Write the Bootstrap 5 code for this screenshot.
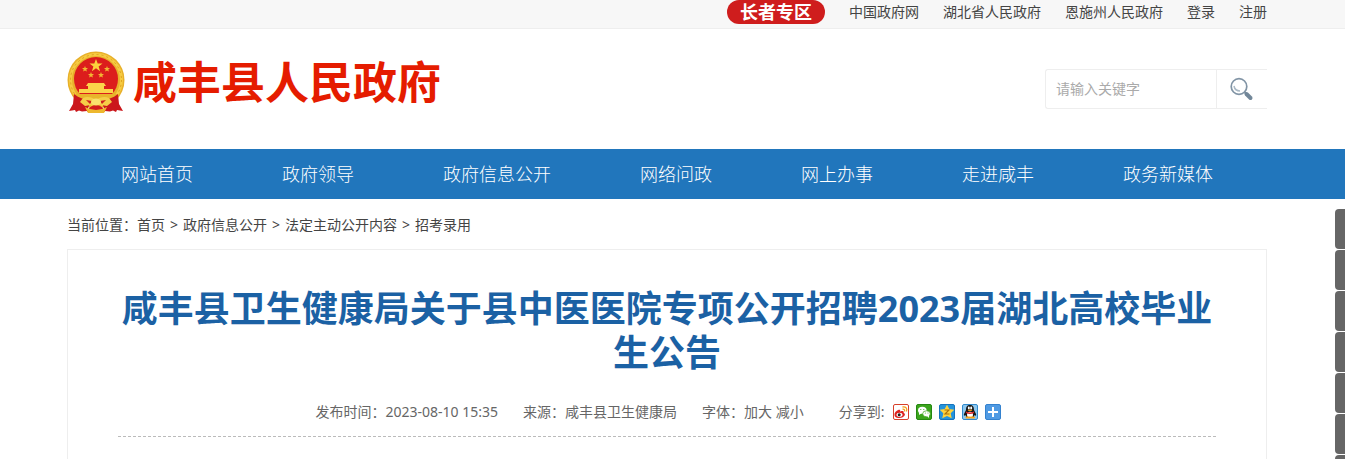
<!DOCTYPE html>
<html lang="zh-CN">
<head>
<meta charset="utf-8">
<meta name="viewport" content="width=device-width, initial-scale=1">
<title>咸丰县人民政府</title>
<link href="https://cdn.jsdelivr.net/npm/bootstrap@5.3.0/dist/css/bootstrap.min.css" rel="stylesheet">
<style>
body { font-family: "Noto Sans", "Noto Sans CJK SC", sans-serif; font-size: 14px; line-height: 20px; color: #444; overflow-x: hidden; }
a { color: inherit; text-decoration: none; }
.page-row { padding-right: 11px; }
.page-width { max-width: 1200px; margin: 0 auto; }
.topbar { background: #f7f7f7; border-bottom: 1px solid #eee; }
.topbar .page-width { height: 28px; gap: 4px 24px; padding-bottom: 5px; }
.elder { background: #cf1d1d; color: #fff; font-size: 18px; font-weight: 700; line-height: 24px; padding: 0 13px; border-radius: 12px; }
.masthead { min-height: 120px; }
.brand { padding-bottom: 14px; }
.site-name { color: #e51c00; font-size: 44px; font-weight: 700; line-height: 60px; }
.search-box { width: 222px; height: 40px; border: 1px solid #eee; border-right: 0; border-radius: 3px 0 0 3px; }
.search-box input { font-size: 14px; padding: 0 10px; border: 0; min-width: 0; }
.search-box input::placeholder { color: #aaa; }
.search-box button { width: 51px; border: 0; border-left: 1px solid #eee; background: #fff; }
.main-nav { background: #2176bc; color: #fff; font-size: 18px; font-weight: 300; }
.main-nav .nav-list { padding: 0 54px; line-height: 50px; }
.crumbs { padding: 16px 0 14px; gap: 5px; }
.article { border: 1px solid #eee; border-bottom: 0; padding: 37px 50px 20px; min-height: 210px; }
.article h1 { color: #1b61a4; font-size: 36px; font-weight: 700; line-height: 44px; margin-bottom: 27px; }
.meta { color: #666; gap: 4px 25px; padding: 0 17px 14px 0; border-bottom: 1px dashed #bbb; }
.font-size-btn { border: 0; padding: 0; background: none; color: inherit; }
.share { gap: 7px; margin-left: 10px; }
.share span { margin-right: 2px; }
.share svg { display: block; }
.side-tabs { top: 209px; gap: 1px; z-index: 10; }
.side-tabs a { width: 10px; height: 40px; background: #666; border-radius: 4px 0 0 4px; }
</style>
</head>
<body>
<header>
  <div class="topbar page-row">
    <div class="page-width d-flex align-items-center justify-content-end">
      <a class="elder" href="#">长者专区</a>
      <a href="#">中国政府网</a>
      <a href="#">湖北省人民政府</a>
      <a href="#">恩施州人民政府</a>
      <a href="#">登录</a>
      <a href="#">注册</a>
    </div>
  </div>
  <div class="page-row">
    <div class="page-width masthead d-flex align-items-center justify-content-between">
      <a class="brand d-flex align-items-center" href="#">
        <svg class="me-2" width="58" height="62" viewBox="0 0 58 62" aria-hidden="true">
          <circle cx="29" cy="29" r="28.500" fill="#e8b02a"/>
          <circle cx="29" cy="29" r="25.500" fill="none" stroke="#f6cb42" stroke-width="3"/>
          <circle cx="29" cy="29" r="25.500" fill="none" stroke="#dfa01f" stroke-width="1" stroke-dasharray="2 3"/>
          <circle cx="29" cy="28" r="22" fill="#dc1d1c"/>
          <path d="m29 8 1.700 4.600h4.800l-3.900 2.900 1.500 4.700-4.100-2.900-4.100 2.900 1.500-4.700-3.900-2.900h4.800z" fill="#fbd23c"/>
          <g fill="#f2b733"><path d="m18 15 .8 2h2.200l-1.700 1.400.6 2.200-1.900-1.200-1.900 1.200.6-2.200L15 17h2.200zM40 15l.8 2h2.200l-1.700 1.400.6 2.200-1.900-1.200-1.900 1.200.6-2.200L37 17h2.200zM24 21l.8 2h2.200l-1.700 1.400.6 2.200-1.900-1.200-1.900 1.200.6-2.200L21 23h2.200zM34 21l.8 2h2.200l-1.700 1.400.6 2.200-1.900-1.200-1.900 1.200.6-2.200L31 23h2.200z"/></g>
          <path d="M21 32h16l2 3h-2v3h9v4H12v-4h9v-3h-2z" fill="#fbd44a"/>
          <path d="M8 43h42v8H8z" fill="#e9b42b"/>
          <path d="M7 43c5 4 11 6 17 6l-4 11-5 .500-3-1-3 1.500-1-2-6 1 4-7z" fill="#cb171c"/>
          <path d="M51 43c-5 4-11 6-17 6l4 11 5 .500 3-1 3 1.500 1-2 6 1-4-7z" fill="#cb171c"/>
          <path d="M20 61c2-5 5-7 9-7s7 2 9 7z" fill="#d31b1c"/>
          <path d="M16 47c4-2 9-1 13 2 4-3 9-4 13-2l3 4-5 4-11-2-11 2-5-4z" fill="#f5ce48"/>
          <path d="m19 49 6 1-2 3zM39 49l-6 1 2 3z" fill="#cf211d"/>
          <path d="M18 56q6 3 11 3t11-3l-3 6H21z" fill="#edb82e"/>
          <ellipse cx="29" cy="51" rx="5" ry="3.500" fill="#fae16e"/>
        </svg>
        <span class="site-name">咸丰县人民政府</span>
      </a>
      <form class="search-box d-flex" role="search">
        <input class="flex-grow-1 rounded-1" type="text" placeholder="请输入关键字" aria-label="请输入关键字">
        <button class="p-0 flex-shrink-0" type="button" aria-label="搜索">
          <svg width="26" height="24" viewBox="0 0 26 24" fill="none">
            <circle cx="10" cy="9.500" r="7.800" stroke="#8194a5" stroke-width="1.700"/>
            <path d="M5 9q1 5 6 5" stroke="#a9b8c4" stroke-width="1.500"/>
            <path d="m15.500 15 2 2" stroke="#8194a5" stroke-width="2"/>
            <path d="m17.500 17 4 4" stroke="#728799" stroke-width="4" stroke-linecap="round"/>
          </svg>
        </button>
      </form>
    </div>
  </div>
  <nav class="main-nav page-row">
    <div class="page-width nav-list d-flex flex-wrap justify-content-between">
      <a href="#">网站首页</a>
      <a href="#">政府领导</a>
      <a href="#">政府信息公开</a>
      <a href="#">网络问政</a>
      <a href="#">网上办事</a>
      <a href="#">走进咸丰</a>
      <a href="#">政务新媒体</a>
    </div>
  </nav>
</header>
<main class="page-row">
  <div class="page-width">
    <nav class="crumbs d-flex flex-wrap" aria-label="当前位置">
      <span>当前位置：<a href="#">首页</a></span><span>&gt;</span>
      <a href="#">政府信息公开</a><span>&gt;</span>
      <a href="#">法定主动公开内容</a><span>&gt;</span>
      <a href="#">招考录用</a>
    </nav>
    <article class="article">
      <h1 class="text-center">咸丰县卫生健康局关于县中医医院专项公开招聘2023届湖北高校毕业生公告</h1>
      <div class="meta d-flex flex-wrap justify-content-center">
        <span>发布时间：2023-08-10 15:35</span>
        <span>来源：咸丰县卫生健康局</span>
        <span>字体：<button class="font-size-btn" type="button">加大</button> <button class="font-size-btn" type="button">减小</button></span>
        <div class="share d-flex align-items-center">
          <span>分享到:</span>
          <a href="#" aria-label="新浪微博"><svg width="16" height="16" viewBox="0 0 16 16"><rect x=".5" y=".5" width="15" height="15" rx="1.500" fill="#fff" stroke="#d8402a"/><path d="M1.500 10.500c0-3 4.500-5.500 5.500-4.500.5.500 0 1.500 0 1.500s3-1 3.500 0-.3 1 .5 1.500c2.500 1.500-.5 5-4.500 5s-5-1.500-5-3.500z" fill="#dd2320"/><ellipse cx="6.500" cy="10.700" rx="3" ry="2" fill="#fff"/><circle cx="6.200" cy="10.700" r="1.500" fill="#222"/><path d="M9.500 3c3.500-.5 5 1.500 4 4.500M9.500 5.200c1.800-.2 2.500.8 2 2.300" fill="none" stroke="#f5a11c" stroke-width="1.300"/></svg></a>
          <a href="#" aria-label="微信"><svg width="16" height="16" viewBox="0 0 16 16"><rect x=".5" y=".5" width="15" height="15" rx="1.500" fill="#3ba51c" stroke="#258811"/><ellipse cx="6.300" cy="6.300" rx="4.300" ry="3.500" fill="#fff"/><path d="m3 8 0 3 3-2z" fill="#fff"/><ellipse cx="10.500" cy="9.800" rx="3.800" ry="3" fill="#fff" stroke="#3ba51c" stroke-width=".7"/><path d="m11 12 2 2v-3z" fill="#fff"/><g fill="#3ba51c"><circle cx="4.800" cy="5.500" r=".6"/><circle cx="7.800" cy="5.500" r=".6"/><circle cx="9.300" cy="9" r=".5"/><circle cx="12" cy="9" r=".5"/></g></svg></a>
          <a href="#" aria-label="QQ空间"><svg width="16" height="16" viewBox="0 0 16 16"><rect x=".5" y=".5" width="15" height="15" rx="1.500" fill="#2493dc" stroke="#1774bd"/><path d="m8 .8 2.300 4.200 5 .7-3.600 3.500 1 5.100L8 12l-4.700 2.300 1-5.100L.7 5.700l5-.7z" fill="#ffd23c"/><path d="M5.500 6h4.500L6 10h4.500" fill="none" stroke="#ab7108" stroke-width="1.100"/></svg></a>
          <a href="#" aria-label="QQ好友"><svg width="16" height="16" viewBox="0 0 16 16"><rect x=".5" y=".5" width="15" height="15" rx="1.500" fill="#8dc8f0" stroke="#3189cc"/><path d="M8 1C5 1 4 3 4 6l-2 4c-.5 2 .5 2 1.500 1l1 2.500h7l1-2.500c1 1 2 1 1.500-1l-2-4c0-3-1-5-4-5z" fill="#171717"/><ellipse cx="8" cy="10.800" rx="3" ry="3" fill="#fff"/><ellipse cx="6.800" cy="4" rx="1" ry="1.400" fill="#fff"/><ellipse cx="9.200" cy="4" rx="1" ry="1.400" fill="#fff"/><ellipse cx="8" cy="6.200" rx="2.300" ry=".8" fill="#f9a31a"/><path d="M4 7.500q4 2 8 0v1.500q-4 2-8 0z" fill="#df2323"/><path d="M4.500 13.500h3M9 13.500h3" stroke="#f9a31a" stroke-width="2" stroke-linecap="round"/></svg></a>
          <a href="#" aria-label="更多"><svg width="16" height="16" viewBox="0 0 16 16"><rect x=".5" y=".5" width="15" height="15" rx="1.500" fill="#4f9ae3" stroke="#3482cf"/><path d="M8 3v10M3 8h10" stroke="#fff" stroke-width="2"/></svg></a>
        </div>
      </div>
    </article>
  </div>
</main>
<aside class="side-tabs position-fixed end-0 d-flex flex-column" aria-label="快捷工具">
  <a href="#"></a><a href="#"></a><a href="#"></a><a href="#"></a><a href="#"></a><a href="#"></a><a href="#"></a>
</aside>
<script src="https://cdn.jsdelivr.net/npm/bootstrap@5.3.0/dist/js/bootstrap.bundle.min.js"></script>
</body>
</html>
